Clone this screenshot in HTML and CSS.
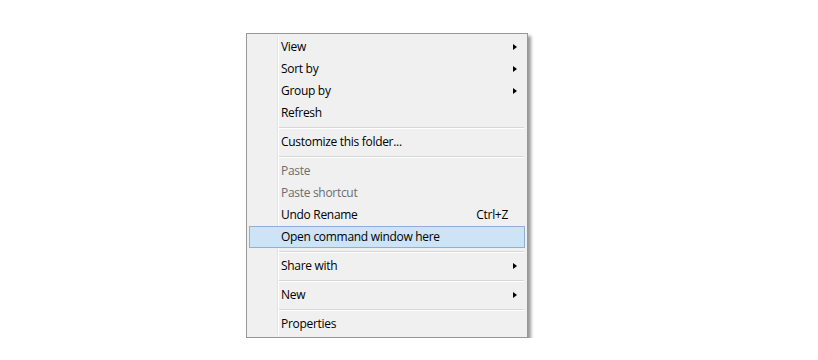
FILE: index.html
```html
<!DOCTYPE html>
<html>
<head>
<meta charset="utf-8">
<link rel="stylesheet" href="styles.css">
</head>
<body>
<div class="menu">
  <div class="item"><span class="label">View</span><span class="arrow"></span></div>
  <div class="item"><span class="label">Sort by</span><span class="arrow"></span></div>
  <div class="item"><span class="label">Group by</span><span class="arrow"></span></div>
  <div class="item"><span class="label">Refresh</span></div>
  <div class="sep"></div>
  <div class="item"><span class="label">Customize this folder...</span></div>
  <div class="sep"></div>
  <div class="item disabled"><span class="label">Paste</span></div>
  <div class="item disabled"><span class="label">Paste shortcut</span></div>
  <div class="item"><span class="label">Undo Rename</span><span class="shortcut">Ctrl+Z</span></div>
  <div class="item active"><span class="label">Open command window here</span></div>
  <div class="sep"></div>
  <div class="item"><span class="label">Share with</span><span class="arrow"></span></div>
  <div class="sep"></div>
  <div class="item"><span class="label">New</span><span class="arrow"></span></div>
  <div class="sep"></div>
  <div class="item"><span class="label">Properties</span></div>
</div>
</body>
</html>
```
FILE: styles.css
```css
html, body {
  margin: 0;
  padding: 0;
  background: #ffffff;
}
body {
  font-family: "Open Sans", "Noto Sans", "Liberation Sans", sans-serif;
  font-size: 12px;
  letter-spacing: -0.3px;
  color: #000;
}
.menu {
  margin: 33px 0 0 246px;
  width: 276px;
  padding: 2px;
  background: #f0f0f0;
  border: 1px solid #979797;
  box-shadow: 3px 3px 3px rgba(0, 0, 0, 0.4);
  position: relative;
}
.menu::before {
  content: "";
  position: absolute;
  top: 2px;
  bottom: 2px;
  left: 30px;
  width: 1px;
  background: #e3e3e3;
  border-right: 1px solid #ffffff;
}
.item {
  height: 22px;
  display: flex;
  align-items: center;
  padding-left: 31px;
  padding-right: 7px;
  box-sizing: border-box;
  position: relative;
  border: 1px solid transparent;
  line-height: 20px;
}
.label {
  flex: 1;
  white-space: nowrap;
}
.shortcut {
  margin-right: 9px;
}
.disabled {
  color: #6d6d6d;
}
.active {
  background: #cde4f7;
  border-color: #8fb1d1;
  z-index: 1;
}
.arrow {
  width: 0;
  height: 0;
  border-top: 3.5px solid transparent;
  border-bottom: 3.5px solid transparent;
  border-left: 4px solid #000;
}
.sep {
  height: 7px;
  display: flex;
  align-items: center;
  padding-left: 30px;
  padding-right: 1px;
}
.sep::after {
  content: "";
  flex: 1;
  height: 1px;
  background: #d7d7d7;
  border-bottom: 1px solid #ffffff;
}
```
